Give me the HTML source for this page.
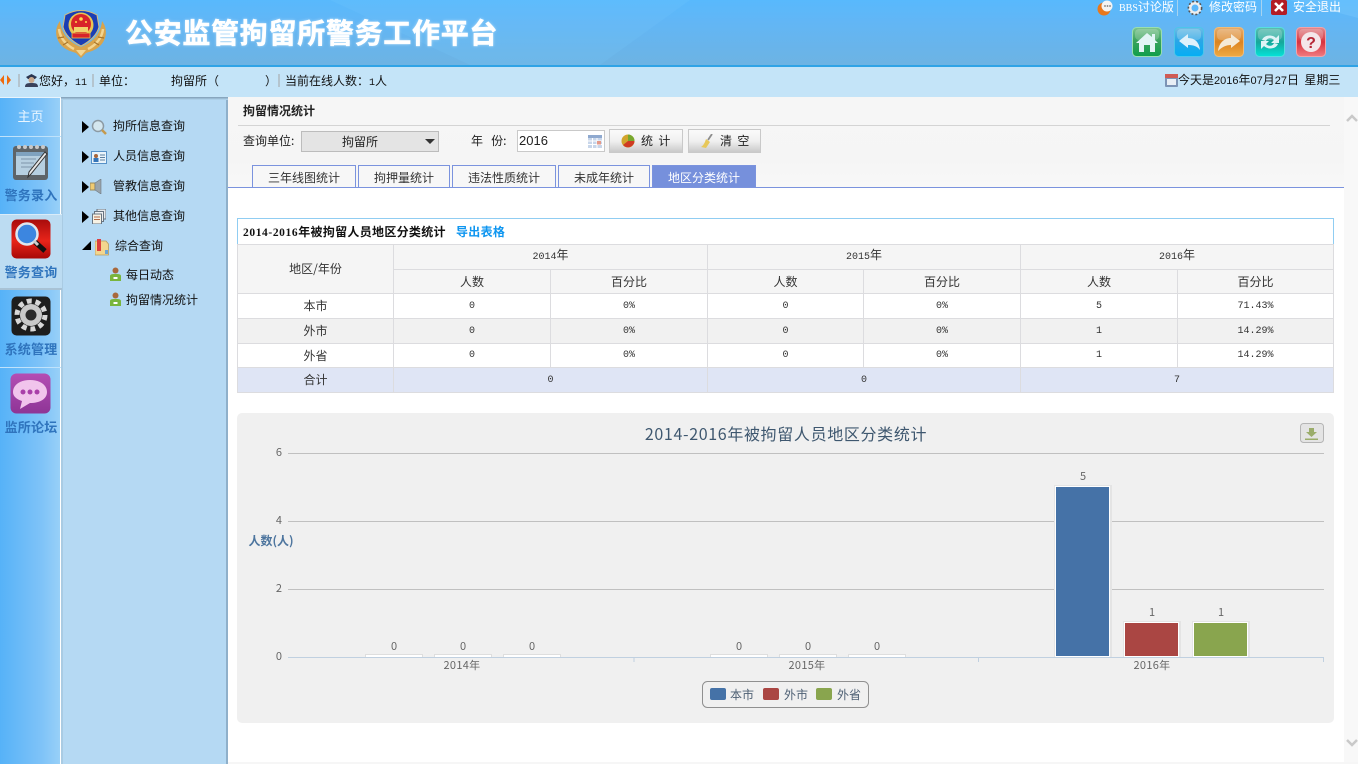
<!DOCTYPE html>
<html lang="zh-CN">
<head>
<meta charset="utf-8">
<title>公安监管拘留所警务工作平台</title>
<style>
*{box-sizing:border-box;margin:0;padding:0}
html,body{width:1358px;height:764px;overflow:hidden;background:#fff}
body{position:relative;font:12px "WenQuanYi Zen Hei","Noto Sans CJK SC",sans-serif;color:#111}
.a{position:absolute;white-space:nowrap}
svg{position:absolute;display:block}
#hdr{left:0;top:0;width:1358px;height:67px;background:linear-gradient(180deg,#58b9fd 0,#62b6f5 35%,#6db3e3 100%);border-bottom:2px solid #2fa3e6;overflow:hidden}
#ttl{left:125px;top:13px;font:bold 28px/38px "Noto Sans CJK SC","WenQuanYi Zen Hei",sans-serif;letter-spacing:.7px;color:#fff;-webkit-text-stroke:.5px #fff;text-shadow:0 0 3px rgba(255,255,255,.55)}
.top{color:#fff;font-size:12px;line-height:14px;top:0}
#bar{left:0;top:67px;width:1358px;height:30px;background:#c4e4f8}
.sep{width:2px;height:13px;background:#b4c4ce;top:74px}
#nav{left:0;top:97px;width:61px;height:667px;background:linear-gradient(90deg,#56b2f8 0,#7fc3f8 70%,#98d0f8 100%);border-right:1px solid #fff}
.nl{left:0;width:61px;height:1px;background:#bfe2fb}
.nt{left:0;width:62px;text-align:center;color:#2f74bd;font:bold 13px/16px "Noto Sans CJK SC",sans-serif;letter-spacing:.2px}
#pan{left:61px;top:97px;width:167px;height:667px;background:#b5d9f3;border-right:2px solid #8fb0ca;border-left:2px solid #a9cbe3}
#pan:before{content:"";position:absolute;left:-2px;right:-2px;top:0;height:3px;background:linear-gradient(#7f9cb3,#b5d9f3)}
.m{left:113px;font-size:12px;line-height:16px}
.tri{width:0;height:0;border-top:6px solid transparent;border-bottom:6px solid transparent;border-left:7px solid #000;left:82px}
#qb{left:228px;top:97px;width:1116px;height:90px;background:linear-gradient(#f6f6f6,#f5f5f5 70%,#f8f8f8)}
.btn{top:129px;height:24px;border:1px solid #c9c9c9;background:linear-gradient(#fafafa,#f0f0f0 50%,#c9c9c9);line-height:22px;color:#222}
.tab{top:165px;height:23px;border:1px solid #7b93de;border-bottom:0;text-align:center;line-height:23px;background:#f7f7f7;color:#333}
#tb{left:237px;top:218px;width:1097px;height:175px;background:#fff}
table{position:absolute;left:0;top:26px;width:1096px;border-collapse:collapse;table-layout:fixed;color:#333}
td{border:1px solid #dcdcdf;text-align:center;font-size:12px;line-height:14px;padding:0;vertical-align:middle}
.n{font:10px/14px "Liberation Mono",monospace;color:#333;padding-top:1px}
.h{background:#f5f5f5}
.y{font:10px/12px "Liberation Mono",monospace}
</style>
</head>
<body>

<div class="a" id="hdr">
  <svg width="1358" height="65" style="left:0;top:0">
    <polygon points="330,0 690,0 600,65 470,65" fill="#7bd0ff" opacity=".16"/>
    <polygon points="1290,0 1358,0 1358,18" fill="#8ad2ff" opacity=".25"/>
  </svg>
</div>

<svg width="50" height="54" viewBox="56 6 50 54" style="left:56px;top:6px">
  <path d="M60 21C53 30 55 45 70 51L76 53L81 58L86 53L92 51C107 45 109 30 102 21C101 32 94 42 81 47C68 42 61 32 60 21Z" fill="#d9a44c"/>
  <path d="M59 29C60 38 66 45 74 49M103 29C102 38 96 45 88 49" fill="none" stroke="#f3d591" stroke-width="2.500"/>
  <path d="M58 38L64 37M63 45L68 42M104 38L98 37M99 45L94 42" stroke="#a9762c" stroke-width="1.200"/>
  <path d="M76 50L81 56L86 50Z" fill="#f3d591"/>
  <path d="M65 15Q81 6 97 15L99 27Q96 38 81 46Q66 38 63 27Z" fill="#1a3eb4" stroke="#d6bc7c" stroke-width="1"/>
  <circle cx="81" cy="25" r="12.500" fill="#e9c552"/>
  <circle cx="81" cy="24" r="10" fill="#d8232a"/>
  <rect x="74" y="27" width="14" height="5" fill="#f2d26a"/>
  <rect x="72" y="33" width="18" height="5" fill="#d8232a" stroke="#e8c24e" stroke-width=".8"/>
  <circle cx="81" cy="19" r="1.800" fill="#ffd94c"/><circle cx="76" cy="22" r="1" fill="#ffd94c"/><circle cx="86" cy="22" r="1" fill="#ffd94c"/>
</svg>

<div class="a" id="ttl">公安监管拘留所警务工作平台</div>

<svg width="16" height="16" viewBox="0 0 16 16" style="left:1097px;top:0"><circle cx="7" cy="9" r="6.500" fill="#e9781c"/><circle cx="10" cy="6" r="5.500" fill="#f3f3f3"/><circle cx="8" cy="6" r=".9" fill="#777"/><circle cx="10.500" cy="6" r=".9" fill="#777"/><circle cx="13" cy="6" r=".9" fill="#777"/></svg>
<div class="a top" style="left:1119px"><span style="font:10px 'Liberation Serif',serif">BBS</span>讨论版</div>
<div class="a" style="left:1177px;top:0;width:1px;height:16px;background:#a6d3f0"></div>
<svg width="16" height="16" viewBox="0 0 16 16" style="left:1187px;top:0"><circle cx="8" cy="8" r="5" fill="none" stroke="#eee" stroke-width="3"/><circle cx="8" cy="8" r="6.600" fill="none" stroke="#555" stroke-width="1.600" stroke-dasharray="2 2"/></svg>
<div class="a top" style="left:1209px">修改密码</div>
<div class="a" style="left:1261px;top:0;width:1px;height:16px;background:#a6d3f0"></div>
<svg width="16" height="16" viewBox="0 0 16 16" style="left:1271px;top:0"><rect width="16" height="15" rx="2" fill="#b31c24"/><path d="M4 3L12 11M12 3L4 11" stroke="#fff" stroke-width="2.600"/></svg>
<div class="a top" style="left:1293px">安全退出</div>

<!-- toolbar icons -->
<svg width="30" height="30" viewBox="0 0 30 30" style="left:1132px;top:27px"><defs><linearGradient id="g1" x1="0" y1="0" x2="0" y2="1"><stop offset="0" stop-color="#7fc58f"/><stop offset=".45" stop-color="#3aa35c"/><stop offset="1" stop-color="#0f9e4c"/></linearGradient></defs><rect x=".5" y=".5" width="29" height="29" rx="4" fill="url(#g1)" stroke="#9adfb0"/><rect x="3" y="2" width="24" height="11" rx="4" fill="#fff" opacity=".2"/><path d="M15 6L20 10V7H23V13L26 16H23V25H18V18H12V25H7V16H4Z" fill="#e2f5f5"/></svg>
<svg width="30" height="30" viewBox="0 0 30 30" style="left:1174px;top:27px"><defs><linearGradient id="g2" x1="0" y1="0" x2="0" y2="1"><stop offset="0" stop-color="#70bde4"/><stop offset=".45" stop-color="#2ba6e6"/><stop offset="1" stop-color="#04aef4"/></linearGradient></defs><rect x=".5" y=".5" width="29" height="29" rx="4" fill="url(#g2)" stroke="#4cc5ea"/><rect x="3" y="2" width="24" height="11" rx="4" fill="#fff" opacity=".2"/><path d="M5 14L14 7V11C21 11 25 15 26 23C23 19 19 18 14 18V21Z" fill="#dff1fb"/></svg>
<svg width="30" height="30" viewBox="0 0 30 30" style="left:1214px;top:27px"><defs><linearGradient id="g3" x1="0" y1="0" x2="0" y2="1"><stop offset="0" stop-color="#e6ac6e"/><stop offset=".5" stop-color="#dc8420"/><stop offset="1" stop-color="#efaa42"/></linearGradient></defs><rect x=".5" y=".5" width="29" height="29" rx="4" fill="url(#g3)" stroke="#f0bd7a"/><rect x="3" y="2" width="24" height="11" rx="4" fill="#fff" opacity=".2"/><path d="M26 14L17 7V11C10 11 5 16 4 24C8 20 12 18 17 18V21Z" fill="#f5ead6"/></svg>
<svg width="30" height="30" viewBox="0 0 30 30" style="left:1255px;top:27px"><defs><linearGradient id="g4" x1="0" y1="0" x2="0" y2="1"><stop offset="0" stop-color="#5fbdb0"/><stop offset=".5" stop-color="#16a79a"/><stop offset="1" stop-color="#05e2d8"/></linearGradient></defs><rect x=".5" y=".5" width="29" height="29" rx="4" fill="url(#g4)" stroke="#56dfe0"/><rect x="3" y="2" width="24" height="11" rx="4" fill="#fff" opacity=".2"/><path d="M7 13C9 8 17 7 21 11L24 8V16H16L19 13C16 10 12 11 11 14ZM23 17C21 22 13 23 9 19L6 22V14H14L11 17C14 20 18 19 19 16Z" fill="#def3f6"/></svg>
<svg width="30" height="30" viewBox="0 0 30 30" style="left:1296px;top:27px"><defs><linearGradient id="g5" x1="0" y1="0" x2="0" y2="1"><stop offset="0" stop-color="#e18b8f"/><stop offset=".5" stop-color="#d8333f"/><stop offset="1" stop-color="#f27a80"/></linearGradient></defs><rect x=".5" y=".5" width="29" height="29" rx="4" fill="url(#g5)" stroke="#f3a3a8"/><rect x="3" y="2" width="24" height="11" rx="4" fill="#fff" opacity=".2"/><circle cx="15" cy="15" r="10" fill="#f4e6ea"/><text x="15" y="21" text-anchor="middle" font-family="Liberation Sans" font-weight="bold" font-size="16" fill="#b52535">?</text></svg>

<!-- info bar -->
<div class="a" id="bar"></div>
<svg width="12" height="10" viewBox="0 0 12 10" style="left:0;top:75px"><path d="M0 5L4 0V10ZM7 0L11 5L7 10Z" fill="#ef6a0d"/></svg>
<div class="a sep" style="left:18px"></div>
<svg width="13" height="13" viewBox="0 0 13 13" style="left:25px;top:74px"><path d="M1 3L6.500 0L12 3L10 5H3Z" fill="#2a3550"/><circle cx="6.500" cy="6" r="3" fill="#c9a98e"/><path d="M0 13C0 9 3 9 6.500 9C10 9 13 9 13 13Z" fill="#39425c"/></svg>
<div class="a" style="left:39px;top:73px;line-height:15px">您好，<span style="font:10px 'Liberation Mono',monospace">11</span></div>
<div class="a sep" style="left:92px"></div>
<div class="a" style="left:99px;top:73px;line-height:15px">单位：</div>
<div class="a" style="left:171px;top:73px;line-height:15px">拘留所（</div>
<div class="a" style="left:265px;top:73px;line-height:15px">）</div>
<div class="a sep" style="left:278px"></div>
<div class="a" style="left:285px;top:73px;line-height:15px">当前在线人数：<span style="font:10px 'Liberation Mono',monospace">1</span>人</div>
<svg width="13" height="13" viewBox="0 0 13 13" style="left:1165px;top:74px"><rect width="13" height="13" rx="1" fill="#7c93b5"/><rect width="13" height="4" fill="#cf5b55"/><rect x="2" y="5" width="9" height="6" fill="#e8eef5"/></svg>
<div class="a" style="left:1178px;top:72px;line-height:15px">今天是<span style="font:11px 'Liberation Sans',sans-serif">2016</span>年<span style="font:11px 'Liberation Sans',sans-serif">07</span>月<span style="font:11px 'Liberation Sans',sans-serif">27</span>日&nbsp;&nbsp;星期三</div>

<!-- left nav -->
<div class="a" id="nav"></div>
<div class="a" style="left:0;top:97px;width:61px;height:1px;background:#e8f4fd"></div>
<div class="a" style="left:0;top:108px;width:61px;text-align:center;color:#eaf6ff;font:13px/16px 'Noto Sans CJK SC',sans-serif">主页</div>
<div class="a nl" style="top:136px"></div>

<svg width="38" height="38" viewBox="0 0 38 38" style="left:12px;top:143px"><rect x="1" y="3" width="35" height="34" rx="3" fill="#5e6468"/><rect x="4" y="9" width="29" height="23" fill="#b6cfe0"/><rect x="4" y="9" width="29" height="4" fill="#7fa2bf"/><g fill="#c9c9c9"><circle cx="7" cy="4" r="2"/><circle cx="13" cy="4" r="2"/><circle cx="19" cy="4" r="2"/><circle cx="25" cy="4" r="2"/><circle cx="31" cy="4" r="2"/></g><path d="M9 16H24M9 20H22M9 24H20" stroke="#7d95aa" stroke-width="1"/><path d="M35 11L19 31L16 34L17 29L33 9Z" fill="#e8e8e8" stroke="#333" stroke-width="1"/></svg>
<div class="a nt" style="top:187px">警务录入</div>

<div class="a" style="left:0;top:214px;width:62px;height:76px;background:#bcdcf2;z-index:2;border-top:1px solid #d9ecf9;border-bottom:2px solid #a8c2d5"></div>
<svg width="40" height="40" viewBox="0 0 40 40" style="left:11px;top:219px;z-index:3"><defs><linearGradient id="rd" x1="0" y1="0" x2="0" y2="1"><stop offset="0" stop-color="#a80c0c"/><stop offset=".55" stop-color="#e8241a"/><stop offset="1" stop-color="#a80808"/></linearGradient></defs><rect x=".5" y=".5" width="39" height="39" rx="5" fill="url(#rd)"/><circle cx="16" cy="15" r="10.500" fill="#3c86e0" stroke="#dfe6ee" stroke-width="2.500"/><path d="M24 23L34 32" stroke="#111" stroke-width="5"/><path d="M23 22L27 26" stroke="#ccc" stroke-width="3"/></svg>
<div class="a nt" style="top:264px;z-index:3">警务查询</div>

<svg width="40" height="40" viewBox="0 0 40 40" style="left:11px;top:296px"><rect x=".5" y=".5" width="39" height="39" rx="5" fill="#1d1d1d"/><circle cx="20" cy="19" r="11" fill="#c9c9c9"/><circle cx="20" cy="19" r="14" fill="none" stroke="#d8d8d8" stroke-width="5" stroke-dasharray="5 3.800"/><circle cx="20" cy="19" r="5.500" fill="#2b2b2b"/></svg>
<div class="a nt" style="top:341px">系统管理</div>
<div class="a nl" style="top:367px"></div>

<svg width="41" height="41" viewBox="0 0 41 41" style="left:10px;top:373px"><defs><linearGradient id="pu" x1="0" y1="0" x2="0" y2="1"><stop offset="0" stop-color="#b44db4"/><stop offset="1" stop-color="#8e3596"/></linearGradient></defs><rect x=".5" y=".5" width="40" height="40" rx="6" fill="url(#pu)"/><path d="M20 7C30 7 37 12 37 19C37 26 30 30 20 30L10 36L12 28C6 26 3 23 3 19C3 12 10 7 20 7Z" fill="#f1c4ec"/><circle cx="13" cy="19" r="2.500" fill="#a93fa9"/><circle cx="20" cy="19" r="2.500" fill="#a93fa9"/><circle cx="27" cy="19" r="2.500" fill="#a93fa9"/></svg>
<div class="a nt" style="top:419px">监所论坛</div>

<!-- menu panel -->
<div class="a" id="pan"></div>
<div class="a tri" style="top:121px"></div>
<svg width="16" height="16" viewBox="0 0 16 16" style="left:91px;top:119px"><circle cx="7" cy="7" r="5.500" fill="#d4e7ef" stroke="#8c9aa3" stroke-width="1.500"/><path d="M11 11L15 15" stroke="#c49a4e" stroke-width="2.500"/></svg>
<div class="a m" style="top:118px">拘所信息查询</div>
<div class="a tri" style="top:151px"></div>
<svg width="16" height="13" viewBox="0 0 16 13" style="left:91px;top:151px"><rect x=".5" y=".5" width="15" height="12" fill="#eaf4fb" stroke="#5791c7"/><circle cx="5" cy="5" r="2" fill="#a8663a"/><rect x="2.500" y="7" width="5" height="4" fill="#3575b8"/><path d="M9 4H14M9 6.500H14M9 9H14" stroke="#5c7f9f"/></svg>
<div class="a m" style="top:148px">人员信息查询</div>
<div class="a tri" style="top:181px"></div>
<svg width="13" height="15" viewBox="0 0 13 15" style="left:90px;top:179px"><rect x="0" y="4" width="5" height="7" fill="#f0cb72" stroke="#9a8a5c"/><path d="M5 4L11 0V15L5 11Z" fill="#99a4ac" stroke="#6f7a82" stroke-width=".6"/></svg>
<div class="a m" style="top:178px">管教信息查询</div>
<div class="a tri" style="top:211px"></div>
<svg width="14" height="15" viewBox="0 0 14 15" style="left:92px;top:209px"><rect x="5" y="0" width="9" height="10" fill="#e5e9ec" stroke="#687480"/><rect x="2.500" y="2.500" width="9" height="10" fill="#eef0f2" stroke="#687480"/><rect x=".5" y="5" width="9" height="10" fill="#f7f2e4" stroke="#687480"/><path d="M2 8H8M2 10.500H8" stroke="#b06b4a"/></svg>
<div class="a m" style="top:208px">其他信息查询</div>
<div class="a" style="left:82px;top:241px;width:0;height:0;border-bottom:9px solid #000;border-left:9px solid transparent"></div>
<svg width="14" height="17" viewBox="0 0 14 17" style="left:95px;top:239px"><path d="M0 2H11L13.500 5V16H0Z" fill="#f3d68e" stroke="#b89c5c" stroke-width=".8"/><rect x="2" y="0" width="4" height="12" fill="#dc3f3f"/><rect x="10" y="11" width="3" height="4" fill="#6aa5d8"/></svg>
<div class="a m" style="left:115px;top:238px">综合查询</div>
<svg width="11" height="14" viewBox="0 0 11 14" style="left:110px;top:267px"><circle cx="5.500" cy="3.500" r="3" fill="#a8683c"/><path d="M0 14V9C0 7 3 7 5.500 7C8 7 11 7 11 9V14Z" fill="#79b53d"/><rect x="3.500" y="10" width="4" height="2" fill="#fff"/></svg>
<div class="a" style="left:126px;top:267px;line-height:16px">每日动态</div>
<svg width="11" height="14" viewBox="0 0 11 14" style="left:110px;top:292px"><circle cx="5.500" cy="3.500" r="3" fill="#a8683c"/><path d="M0 14V9C0 7 3 7 5.500 7C8 7 11 7 11 9V14Z" fill="#79b53d"/><rect x="3.500" y="10" width="4" height="2" fill="#fff"/></svg>
<div class="a" style="left:126px;top:292px;line-height:16px">拘留情况统计</div>

<!-- query bar -->
<div class="a" id="qb"></div>
<div class="a" style="left:1344px;top:97px;width:14px;height:667px;background:#f8f8f8"></div>
<svg width="12" height="8" viewBox="0 0 12 8" style="left:1346px;top:114px"><path d="M1 7L6 2L11 7" fill="none" stroke="#c9c9c9" stroke-width="2.500"/></svg>
<svg width="12" height="8" viewBox="0 0 12 8" style="left:1346px;top:739px"><path d="M1 1L6 6L11 1" fill="none" stroke="#c9c9c9" stroke-width="2.500"/></svg>
<div class="a" style="left:228px;top:762px;width:1130px;height:2px;background:#f6f6f6"></div>

<div class="a" style="left:243px;top:103px;font-weight:bold;line-height:16px;color:#222">拘留情况统计</div>
<div class="a" style="left:238px;top:125px;width:1092px;height:1px;background:#d4d4d4"></div>
<div class="a" style="left:243px;top:133px;line-height:16px;color:#222">查询单位:</div>
<div class="a" style="left:301px;top:131px;width:138px;height:21px;background:#e4e4e4;border:1px solid #bcbcbc;text-align:center;line-height:19px;padding-right:20px;color:#222">拘留所</div>
<div class="a" style="left:425px;top:139px;width:0;height:0;border-left:5px solid transparent;border-right:5px solid transparent;border-top:5px solid #333"></div>
<div class="a" style="left:471px;top:133px;line-height:16px;color:#222">年&nbsp;&nbsp;&nbsp;份:</div>
<div class="a" style="left:517px;top:130px;width:88px;height:22px;background:#fff;border:1px solid #c9c9c9;font:13px/20px 'Liberation Sans',sans-serif;padding-left:1px;color:#222">2016</div>
<svg width="14" height="13" viewBox="0 0 14 13" style="left:588px;top:135px"><rect width="14" height="13" fill="#c8d6ea"/><rect width="14" height="3" fill="#8fa9cf"/><path d="M0 6H14M0 9.500H14M4.500 3V13M9 3V13" stroke="#fff"/><rect x="9" y="6" width="4" height="3.500" fill="#e49a8a"/></svg>
<div class="a btn" style="left:609px;width:74px;padding-left:31px">统&nbsp;&nbsp;计</div>
<svg width="14" height="14" viewBox="0 0 14 14" style="left:621px;top:134px"><circle cx="7" cy="7" r="6.500" fill="#d2a52c"/><path d="M7 7L7 .5A6.500 6.500 0 0 1 13.500 7Z" fill="#77a82e"/><path d="M7 7L13.500 7A6.500 6.500 0 0 1 2 11Z" fill="#cf3b22"/></svg>
<div class="a btn" style="left:688px;width:73px;padding-left:31px">清&nbsp;&nbsp;空</div>
<svg width="12" height="14" viewBox="0 0 12 14" style="left:701px;top:134px"><path d="M11 0L7 6" stroke="#8c8c8c" stroke-width="1.800"/><path d="M5 5L9 8L5 14L0 13C3 11 4 8 5 5Z" fill="#e7c85a"/></svg>

<!-- tabs -->
<div class="a tab" style="left:252px;width:104px">三年线图统计</div>
<div class="a tab" style="left:358px;width:92px">拘押量统计</div>
<div class="a tab" style="left:452px;width:104px">违法性质统计</div>
<div class="a tab" style="left:558px;width:92px">未成年统计</div>
<div class="a tab" style="left:652px;width:104px;background:#7690dc;color:#fff">地区分类统计</div>
<div class="a" style="left:228px;top:187px;width:1116px;height:1px;background:#7b93de"></div>

<!-- table -->
<div class="a" id="tb">
  <div class="a" style="left:0;top:0;width:1097px;height:27px;border:1px solid #90cdf2;border-bottom:1px solid #dcdcdf;background:#fff"></div>
  <div class="a" style="left:6px;top:6px;font-weight:bold;line-height:16px;color:#111;letter-spacing:.3px"><span style="font:bold 11.500px 'Liberation Serif',serif;letter-spacing:.6px">2014-2016</span>年被拘留人员地区分类统计</div>
  <div class="a" style="left:219px;top:6px;font-weight:bold;line-height:16px;font-size:12px;letter-spacing:.3px;color:#0f96f0">导出表格</div>
  <table>
    <colgroup><col style="width:156px"><col style="width:157px"><col style="width:157px"><col style="width:156px"><col style="width:157px"><col style="width:157px"><col style="width:156px"></colgroup>
    <tr style="height:25px" class="h"><td rowspan="2">地区/年份</td><td colspan="2" style="padding-bottom:2px"><span class="y">2014</span>年</td><td colspan="2" style="padding-bottom:2px"><span class="y">2015</span>年</td><td colspan="2" style="padding-bottom:2px"><span class="y">2016</span>年</td></tr>
    <tr style="height:24px" class="h"><td>人数</td><td>百分比</td><td>人数</td><td>百分比</td><td>人数</td><td>百分比</td></tr>
    <tr style="height:25px"><td>本市</td><td class="n">0</td><td class="n">0%</td><td class="n">0</td><td class="n">0%</td><td class="n">5</td><td class="n">71.43%</td></tr>
    <tr style="height:25px;background:#f1f1f1"><td>外市</td><td class="n">0</td><td class="n">0%</td><td class="n">0</td><td class="n">0%</td><td class="n">1</td><td class="n">14.29%</td></tr>
    <tr style="height:24px"><td>外省</td><td class="n">0</td><td class="n">0%</td><td class="n">0</td><td class="n">0%</td><td class="n">1</td><td class="n">14.29%</td></tr>
    <tr style="height:25px;background:#dfe5f5"><td>合计</td><td colspan="2" class="n">0</td><td colspan="2" class="n">0</td><td colspan="2" class="n">7</td></tr>
  </table>
</div>

<!-- chart -->
<svg width="1098" height="311" viewBox="237 413 1098 311" style="left:237px;top:413px;font-family:'Noto Sans CJK SC','Liberation Sans',sans-serif">
  <rect x="237" y="413" width="1097" height="310" rx="5" fill="#f0f0f0"/>
  <text x="786" y="440" text-anchor="middle" font-size="16" fill="#3e576f" letter-spacing=".65">2014-2016年被拘留人员地区分类统计</text>
  <path d="M288 453.500H1324M288 521.500H1324M288 589.500H1324" stroke="#c0c0c0" stroke-width="1"/>
  <g font-size="11" fill="#666" text-anchor="end">
    <text x="282" y="456">6</text><text x="282" y="524">4</text><text x="282" y="592">2</text><text x="282" y="660">0</text>
  </g>
  <text x="271" y="545" text-anchor="middle" font-size="12" font-weight="bold" fill="#4d759e">人数(人)</text>
  <g fill="#fff" stroke="#dedede"><rect x="365.500" y="654.500" width="57" height="3"/><rect x="434.500" y="654.500" width="57" height="3"/><rect x="503.500" y="654.500" width="57" height="3"/><rect x="710.500" y="654.500" width="57" height="3"/><rect x="779.500" y="654.500" width="57" height="3"/><rect x="848.500" y="654.500" width="57" height="3"/></g>
  <g fill="#e4e4e4"><rect x="1054" y="485" width="58" height="172"/><rect x="1123" y="621" width="58" height="36"/><rect x="1192" y="621" width="58" height="36"/></g>
  <rect x="1055.500" y="486.500" width="54" height="170" fill="#4572a7" stroke="#fff"/>
  <rect x="1124.500" y="622.500" width="54" height="34" fill="#aa4643" stroke="#fff"/>
  <rect x="1193.500" y="622.500" width="54" height="34" fill="#89a54e" stroke="#fff"/>
  <path d="M288 657.500H1324M634 657.500V662M978.500 657.500V662M1323.500 657.500V662" stroke="#c0d0e0" fill="none"/>
  <g font-size="11" fill="#666" text-anchor="middle">
    <text x="394" y="650">0</text><text x="463" y="650">0</text><text x="532" y="650">0</text>
    <text x="739" y="650">0</text><text x="808" y="650">0</text><text x="877" y="650">0</text>
    <text x="1083" y="480">5</text><text x="1152" y="616">1</text><text x="1221" y="616">1</text>
    <g letter-spacing=".3"><text x="462" y="669">2014年</text><text x="807" y="669">2015年</text><text x="1152" y="669">2016年</text></g>
  </g>
  <rect x="702.500" y="681.500" width="166" height="26" rx="5" fill="#f0f0f0" stroke="#909090"/>
  <rect x="710" y="688" width="16" height="12" rx="2" fill="#4572a7"/>
  <rect x="763" y="688" width="16" height="12" rx="2" fill="#aa4643"/>
  <rect x="816" y="688" width="16" height="12" rx="2" fill="#89a54e"/>
  <g font-size="12" fill="#4d5f73"><text x="730" y="699">本市</text><text x="784" y="699">外市</text><text x="837" y="699">外省</text></g>
  <rect x="1300.500" y="423.500" width="23" height="19" rx="3" fill="#e4e4e4" stroke="#b5b5b5"/>
  <path d="M1309 428H1314V432H1317L1311.500 437L1306 432H1309ZM1305 438.500H1318V440H1305Z" fill="#9bad6b"/>
</svg>

</body>
</html>
